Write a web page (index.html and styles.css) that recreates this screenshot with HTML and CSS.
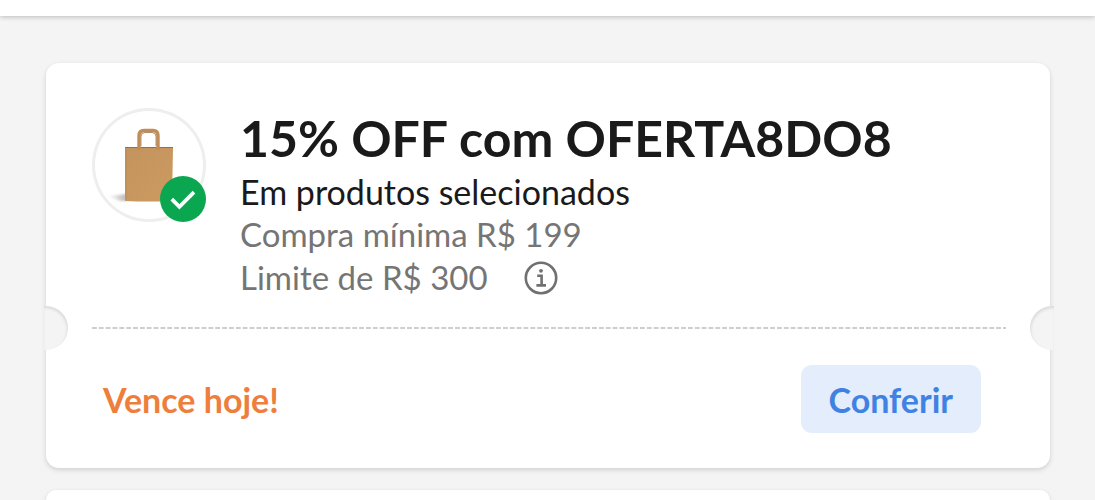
FILE: index.html
```html
<!DOCTYPE html>
<html lang="pt-BR">
<head>
<meta charset="utf-8">
<meta name="viewport" content="width=device-width, initial-scale=1">
<title>Cupons</title>
<link rel="stylesheet" href="styles.css">
</head>
<body>
<header class="topbar"></header>
<main class="coupons">
  <article class="coupon">
    <div class="coupon-main">
      <div class="thumb">
        <svg class="thumb-bag" viewBox="0 0 114 114" aria-hidden="true">
          <defs>
            <linearGradient id="paper" x1="0" y1="0" x2="1" y2="1">
              <stop offset="0" stop-color="#c4945e"/>
              <stop offset="1" stop-color="#cc9a60"/>
            </linearGradient>
            <linearGradient id="shade" x1="0" y1="0" x2="1" y2="0">
              <stop offset="0" stop-color="#aaa" stop-opacity="0"/>
              <stop offset="1" stop-color="#8a8580" stop-opacity=".6"/>
            </linearGradient>
            <filter id="soft" x="-30%" y="-30%" width="160%" height="160%"><feGaussianBlur stdDeviation="1.2"/></filter>
          </defs>
          <path d="M15 88 L34 86 V93 H28 Z" fill="url(#shade)" filter="url(#soft)"/>
          <path d="M33 40 H81 L80 93 Q57 94 33 93 Z" fill="url(#paper)"/>
          <path d="M33 39.500 H81" stroke="#8c7350" stroke-width="1.200"/>
          <path d="M34 41 V92" stroke="#bb8a54" stroke-width="1"/>
          <path d="M47 42 V28 Q47 22.500 52 22.500 H61 Q66 22.500 66 28 V42" fill="none" stroke="#c18d55" stroke-width="3.400"/>
          <path d="M49 38 V28.500 Q49 24.500 53 24.500 H60 Q64 24.500 64 28.500 V38" fill="none" stroke="#a1764a" stroke-width=".8"/>
        </svg>
        <svg class="thumb-check" viewBox="0 0 46 46" role="img" aria-label="Cupom aplicado">
          <circle cx="23" cy="23" r="23" fill="#0ba750"/>
          <path d="M11.800 23.200 L19.400 30.800 L34 16.200" fill="none" stroke="#fff" stroke-width="3.800"/>
        </svg>
      </div>
      <div class="details">
        <h1 class="title">15% OFF com OFERTA8DO8</h1>
        <p class="line line-strong">Em produtos selecionados</p>
        <p class="line">Compra mínima R$ 199</p>
        <div class="limit">
          <p class="line">Limite de R$ 300</p>
          <button class="info" type="button" aria-label="Mais informações">
            <svg class="info-icon" viewBox="0 0 34 34" aria-hidden="true">
              <circle cx="17" cy="17" r="15.200" fill="none" stroke="#707070" stroke-width="2.600"/>
              <circle cx="17" cy="9.800" r="1.900" fill="#707070"/>
              <path d="M13.200 14.800 H17.600 V24.200 M12.400 24.400 H22" fill="none" stroke="#707070" stroke-width="2.600"/>
            </svg>
          </button>
        </div>
      </div>
    </div>
    <div class="tear">
      <span class="notch notch-left"></span>
      <svg class="dashes" aria-hidden="true"><line x1="0" y1="1" x2="100%" y2="1" stroke="#cecece" stroke-width="2" stroke-dasharray="4.800 2.050"/></svg>
      <span class="notch notch-right"></span>
    </div>
    <div class="coupon-foot">
      <p class="expiry">Vence hoje!</p>
      <button class="action" type="button">Conferir</button>
    </div>
  </article>
  <article class="coupon coupon-next"></article>
</main>
</body>
</html>
```
FILE: styles.css
```css
* {
  box-sizing: border-box;
}

body {
  margin: 0;
  background: #f4f4f4;
  color: #1a1a1a;
  font-family: Lato, "Open Sans", sans-serif;
}

h1,
p {
  margin: 0;
}

button {
  border: 0;
  font: inherit;
  cursor: pointer;
}

.topbar {
  height: 16px;
  background: #fff;
  box-shadow: 0 1px 5px rgba(0, 0, 0, 0.24);
}

.coupons {
  display: flex;
  flex-direction: column;
  gap: 22px;
  padding: 47px 45px 0 46px;
}

.coupon {
  background: #fff;
  border-radius: 13px;
  box-shadow: 0 2px 5px rgba(0, 0, 0, 0.15);
}

.coupon-next {
  min-height: 10px;
  border-radius: 13px 13px 0 0;
}

.coupon-main {
  display: flex;
  gap: 34px;
  padding: 45px 46px 7px;
}

.thumb {
  position: relative;
  flex: none;
  width: 114px;
  height: 114px;
  border-radius: 50%;
  box-shadow: inset 0 0 0 3px #eee;
}

.thumb-bag {
  display: block;
  width: 100%;
}

.thumb-check {
  position: absolute;
  right: 0;
  bottom: 0;
  width: 46px;
}

.title {
  margin-bottom: 2px;
  font-size: 50px;
  font-weight: 700;
  line-height: 60px;
}

.line {
  color: #757575;
  font-size: 33px;
  line-height: 43px;
}

.line-strong {
  color: #1a1a1a;
  font-size: 34px;
}

.limit {
  display: flex;
  align-items: center;
  gap: 36px;
}

.info {
  padding: 0;
  background: none;
}

.info-icon {
  display: block;
  width: 34px;
}

.tear {
  display: flex;
  align-items: center;
  justify-content: space-between;
  gap: 24px;
}

.notch {
  flex: none;
  width: 24px;
  height: 44px;
  background: #f4f4f4;
}

.notch-left {
  margin-left: -2px;
  border-radius: 0 22px 22px 0;
  box-shadow: inset -1px 2px 3px rgba(0, 0, 0, 0.1);
}

.notch-right {
  margin-right: -4px;
  border-radius: 22px 0 0 22px;
  box-shadow: inset 1px 2px 3px rgba(0, 0, 0, 0.1);
}

.dashes {
  flex: 1;
  min-width: 0;
  height: 2px;
}

.coupon-foot {
  display: flex;
  align-items: center;
  justify-content: space-between;
  padding: 15px 69px 35px 57px;
}

.expiry {
  color: #ee7e3c;
  font-size: 34px;
  font-weight: 700;
  line-height: 43px;
}

.action {
  padding: 13px 28px 12px;
  border-radius: 11px;
  background: #e3edfb;
  color: #3f82e4;
  font-size: 34px;
  font-weight: 700;
  line-height: 43px;
}
```
